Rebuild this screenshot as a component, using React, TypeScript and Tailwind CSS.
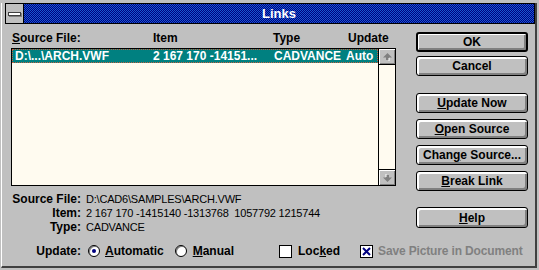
import clsx from 'clsx';
import type { ReactNode } from 'react';

const font = { fontFamily: '"Liberation Sans", Arial, sans-serif' };

function Btn({ children, def, className }: { children: ReactNode; def?: boolean; className?: string }) {
    return (
        <div
            className={clsx(
                'h-[20px] w-[112px] flex items-center justify-center rounded-[3px] border-black bg-[#c0c0c0] text-[12px] font-bold text-black leading-none',
                def
                    ? 'border-2 shadow-[inset_1px_1px_0_#fff,inset_-2px_-2px_0_#808080]'
                    : 'border shadow-[inset_2px_2px_0_#fff,inset_-2px_-2px_0_#808080]',
                className
            )}
        >
            <span>{children}</span>
        </div>
    );
}

function ScrollBtn({ down }: { down?: boolean }) {
    return (
        <div
            className={clsx(
                'h-[16px] w-full bg-[#c0c0c0] flex items-center justify-center shadow-[inset_1px_1px_0_#fff,inset_-1px_-1px_0_#808080]',
                down ? 'border-t border-black' : 'border-b border-black'
            )}
        >
            <svg width="9" height="8" viewBox="0 0 9 8" className={down ? 'rotate-180' : ''}>
                <path d="M4.5 0 L9 4.5 L6 4.5 L6 8 L3 8 L3 4.5 L0 4.5 Z" fill="#808080" />
                <path d="M6 5 L6 8 M3 8 L6 8" stroke="#fff" strokeWidth="1" fill="none" />
            </svg>
        </div>
    );
}

function Radio({ on }: { on?: boolean }) {
    return (
        <div className="w-[12px] h-[12px] rounded-full border border-black bg-white flex items-center justify-center shadow-[inset_1px_1px_0_#808080]">
            {on && <div className="w-[4px] h-[4px] rounded-full bg-[#000080]" />}
        </div>
    );
}

function Check({ x }: { x?: boolean }) {
    return (
        <div className="w-[13px] h-[13px] border border-black bg-white flex items-center justify-center">
            {x && (
                <svg width="9" height="9" viewBox="0 0 9 9">
                    <path d="M1 1 L8 8 M8 1 L1 8" stroke="#000080" strokeWidth="2" />
                </svg>
            )}
        </div>
    );
}

export default function App() {
    return (
        <div className="w-[539px] h-[270px] bg-[#c0c0c0] flex flex-col pt-[3px] pb-[2px] pl-[1px] pr-[2px] overflow-hidden" style={font}>
            <div className="flex-1 flex flex-col border-l border-l-white border-r-2 border-r-[#404040] border-b-2 border-b-[#404040] pl-[3px]">
                {/* title bar */}
                <div className="h-[21px] flex border border-black">
                    <div className="w-[18px] bg-[#c0c0c0] border-r border-black flex items-center justify-center">
                        <div className="w-[13px] h-[4px] bg-white border border-[#404040] shadow-[1px_1px_0_#808080]" />
                    </div>
                    <div className="flex-1 flex items-center justify-center bg-[image:repeating-conic-gradient(#000080_0%_25%,#1858d0_0%_50%)] bg-[length:2px_2px]">
                        <span className="text-white font-bold text-[13px] leading-none">Links</span>
                    </div>
                </div>

                {/* client */}
                <div className="flex-1 flex flex-col pl-[6px]">
                    <div className="flex">
                        <div className="w-[385px] pt-[7px] flex flex-col">
                            <div className="flex h-[14px] items-center text-[12px] font-bold text-black pl-[1px]">
                                <span className="w-[141px]"><u>S</u>ource File:</span>
                                <span className="w-[120px]">Item</span>
                                <span className="w-[75px]">Type</span>
                                <span>Update</span>
                            </div>
                            <div className="mt-[3px] h-[138px] w-[385px] border border-black bg-[#fffbf0] flex">
                                <div className="flex-1">
                                    <div className="h-[14px] bg-[#008080] outline outline-1 outline-dotted outline-[#c06040] -outline-offset-1 flex items-center text-[12px] font-bold text-white pl-[3px] leading-none">
                                        <span className="w-[138px]">D:\...\ARCH.VWF</span>
                                        <span className="w-[121px]">2 167 170 -14151...</span>
                                        <span className="w-[72px]">CADVANCE</span>
                                        <span>Auto</span>
                                    </div>
                                </div>
                                <div className="w-[17px] border-l border-black flex flex-col justify-between">
                                    <ScrollBtn />
                                    <ScrollBtn down />
                                </div>
                            </div>
                            <div className="mt-[6px] flex flex-col text-[12px]">
                                <div className="flex h-[14px] items-center">
                                    <span className="w-[70px] text-right font-bold">Source File:</span>
                                    <span className="ml-[5px] text-[11px] tracking-[-0.2px]">D:\CAD6\SAMPLES\ARCH.VWF</span>
                                </div>
                                <div className="flex h-[14px] items-center">
                                    <span className="w-[70px] text-right font-bold">Item:</span>
                                    <span className="ml-[5px] text-[11px] tracking-[-0.2px] whitespace-pre">2 167 170 -1415140 -1313768  1057792 1215744</span>
                                </div>
                                <div className="flex h-[14px] items-center">
                                    <span className="w-[70px] text-right font-bold">Type:</span>
                                    <span className="ml-[5px] text-[11px] tracking-[-0.2px]">CADVANCE</span>
                                </div>
                            </div>
                        </div>
                        <div className="ml-[20px] pt-[8px] flex flex-col">
                            <Btn def>OK</Btn>
                            <Btn className="mt-[4px]">Cancel</Btn>
                            <Btn className="mt-[17px]"><u>U</u>pdate Now</Btn>
                            <Btn className="mt-[6px]"><u>O</u>pen Source</Btn>
                            <Btn className="mt-[6px]">Chan<u>g</u>e Source...</Btn>
                            <Btn className="mt-[6px]"><u>B</u>reak Link</Btn>
                            <Btn className="mt-[16px] h-[21px]"><u>H</u>elp</Btn>
                        </div>
                    </div>
                    <div className="mt-[9px] h-[16px] flex items-center text-[12px] font-bold">
                        <span className="w-[70px] text-right">Update:</span>
                        <div className="ml-[7px]"><Radio on /></div>
                        <span className="ml-[5px]"><u>A</u>utomatic</span>
                        <div className="ml-[11px]"><Radio /></div>
                        <span className="ml-[6px]"><u>M</u>anual</span>
                        <div className="ml-[45px]"><Check /></div>
                        <span className="ml-[6px]">Loc<u>k</u>ed</span>
                        <div className="ml-[20px]"><Check x /></div>
                        <span className="ml-[5px] text-[#808080] tracking-[-0.15px]">Save Picture in Document</span>
                    </div>
                </div>
            </div>
        </div>
    );
}
